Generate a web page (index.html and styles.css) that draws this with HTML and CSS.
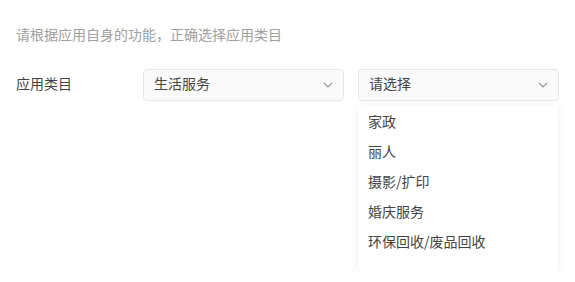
FILE: index.html
```html
<!DOCTYPE html>
<html lang="zh-CN">
<head>
    <meta charset="UTF-8">
    <meta name="viewport" content="width=device-width, initial-scale=1.0">
    <title>应用类目</title>
    <link rel="stylesheet" href="styles.css">
</head>
<body>
    <div class="page">
        <p class="hint">请根据应用自身的功能，正确选择应用类目</p>
        <div class="form-row">
            <div class="label">应用类目</div>
            <div class="select">
                <span class="select-text">生活服务</span>
                <svg class="arrow" width="10" height="6" viewBox="0 0 10 6"><path d="M1 1l4 4 4-4" fill="none" stroke="#999" stroke-width="1.2"/></svg>
            </div>
            <div class="select-wrap">
                <div class="select">
                    <span class="select-text">请选择</span>
                    <svg class="arrow" width="10" height="6" viewBox="0 0 10 6"><path d="M1 1l4 4 4-4" fill="none" stroke="#999" stroke-width="1.2"/></svg>
                </div>
                <div class="dropdown">
                    <div class="option">家政</div>
                    <div class="option">丽人</div>
                    <div class="option">摄影/扩印</div>
                    <div class="option">婚庆服务</div>
                    <div class="option">环保回收/废品回收</div>
                </div>
            </div>
        </div>
    </div>
</body>
</html>
```

FILE: styles.css
```css
body {
    margin: 0;
    background-color: #fff;
    font-family: "Noto Sans CJK SC", "Liberation Sans", sans-serif;
    color: #444;
    font-size: 14px;
}

.page {
    padding: 24px 16px 0 16px;
}

.hint {
    margin: 0;
    color: #a0a0a0;
    font-size: 14px;
    line-height: 20px;
}

.form-row {
    display: flex;
    align-items: flex-start;
    margin-top: 25px;
}

.label {
    width: 127px;
    line-height: 28px;
    padding-bottom: 4px;
}

.select-wrap {
    display: flex;
    flex-direction: column;
    margin-left: 14px;
}

.select {
    width: 179px;
    height: 30px;
    border: 1px solid #e6e6e6;
    border-radius: 4px;
    background-color: #fafafa;
    display: flex;
    align-items: center;
    justify-content: space-between;
    padding: 0 10px 0 10px;
}

.select-text {
    line-height: 26px;
    padding-bottom: 4px;
}

.arrow {
    display: block;
}

.dropdown {
    width: 200px;
    margin-top: 4px;
    padding: 3px 0 13px 0;
    background-color: #fff;
    border-radius: 4px;
    box-shadow: 0 2px 8px rgba(0, 0, 0, 0.08);
}

.option {
    line-height: 26px;
    padding: 0 10px 4px 10px;
}
```
